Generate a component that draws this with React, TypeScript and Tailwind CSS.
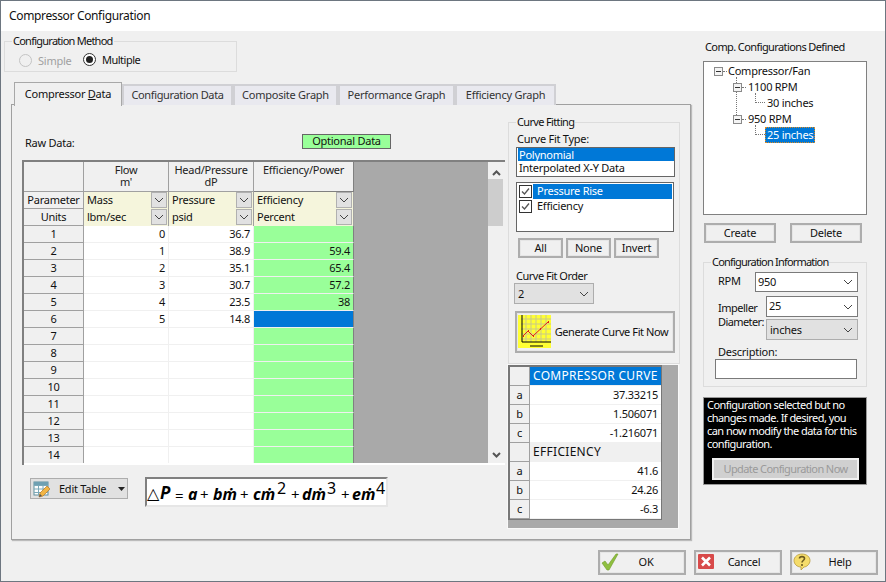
import { ReactNode } from 'react'

const rows = [
  { n: '1', flow: '0', dp: '36.7', eff: '' },
  { n: '2', flow: '1', dp: '38.9', eff: '59.4' },
  { n: '3', flow: '2', dp: '35.1', eff: '65.4' },
  { n: '4', flow: '3', dp: '30.7', eff: '57.2' },
  { n: '5', flow: '4', dp: '23.5', eff: '38' },
  { n: '6', flow: '5', dp: '14.8', eff: '', selected: true },
  { n: '7', flow: '', dp: '', eff: '' },
  { n: '8', flow: '', dp: '', eff: '' },
  { n: '9', flow: '', dp: '', eff: '' },
  { n: '10', flow: '', dp: '', eff: '' },
  { n: '11', flow: '', dp: '', eff: '' },
  { n: '12', flow: '', dp: '', eff: '' },
  { n: '13', flow: '', dp: '', eff: '' },
  { n: '14', flow: '', dp: '', eff: '' },
]

const fitRows = [
  { h: '', v: 'COMPRESSOR CURVE', kind: 'title' },
  { h: 'a', v: '37.33215' },
  { h: 'b', v: '1.506071' },
  { h: 'c', v: '-1.216071' },
  { h: '', v: 'EFFICIENCY', kind: 'section' },
  { h: 'a', v: '41.6' },
  { h: 'b', v: '24.26' },
  { h: 'c', v: '-6.3' },
]

function Chevron({ className = 'text-[#444]' }: { className?: string }) {
  return (
    <svg width="10" height="6" viewBox="0 0 10 6" className={className}>
      <path d="M1 1l4 4 4-4" fill="none" stroke="currentColor" strokeWidth="1" />
    </svg>
  )
}

function Button({ className, children }: { className: string; children: ReactNode }) {
  return (
    <div className={`absolute flex items-center justify-center whitespace-nowrap border-2 border-[#adadad] bg-[#f0f0f0] shadow-[inset_0_0_0_1px_#e6e6e6] ${className}`}>
      {children}
    </div>
  )
}

function Group({ className, label, labelClass }: { className: string; label: string; labelClass: string }) {
  return (
    <div className={`absolute border border-[#dcdcdc] ${className}`}>
      <span className={`absolute left-[7px] top-[-9px] whitespace-nowrap bg-[#f0f0f0] px-px leading-4 ${labelClass}`}>{label}</span>
    </div>
  )
}

function Text({ className, children }: { className: string; children: ReactNode }) {
  return <span className={`absolute whitespace-nowrap leading-4 ${className}`}>{children}</span>
}

function HeaderSelect({ label }: { label: string }) {
  return (
    <div className="relative h-full flex-1 border-r border-[#a0a0a0] bg-[#f5f5dc] pl-[3px] leading-[16px]">
      {label}
      <div className="absolute right-[1px] top-0 flex h-[16px] w-[16px] items-center justify-center border border-[#b0b0b0] bg-[#e1e1e1]">
        <Chevron />
      </div>
    </div>
  )
}

function Check({ top }: { top: string }) {
  return (
    <div className={`absolute left-[519px] flex h-[13px] w-[13px] items-center justify-center border border-[#333] bg-white ${top}`}>
      <svg width="11" height="11" viewBox="0 0 11 11">
        <path d="M2 5.500l2.500 2.500L9 2.500" fill="none" stroke="#555" strokeWidth="1.3" />
      </svg>
    </div>
  )
}

function MinusBox({ className }: { className: string }) {
  return (
    <div className={`absolute flex h-[9px] w-[9px] items-center justify-center border border-[#8a8a8a] bg-[#f4f4f4] ${className}`}>
      <div className="h-px w-[5px] bg-[#333]" />
    </div>
  )
}

function Tab({ className, label }: { className: string; label: string }) {
  return (
    <div className={`absolute top-[84px] flex h-[21px] items-center justify-center whitespace-nowrap border-2 border-b-0 border-[#d0d0d4] bg-[#e9e9ef] text-[#333] ${className}`}>
      {label}
    </div>
  )
}

export default function App() {
  return (
    <div className="relative h-[582px] w-[886px] overflow-hidden bg-[#f0f0f0] font-['Noto_Sans',sans-serif] text-[11px] tracking-[-0.25px] text-[#111]">
      <div className="absolute left-0 top-0 h-full w-px bg-[#6d7680]" />
      <div className="absolute right-0 top-0 h-full w-px bg-[#6d7680]" />
      <div className="absolute left-0 top-0 h-px w-full bg-[#6d7680]" />
      <div className="absolute bottom-0 left-0 h-px w-full bg-[#6d7680]" />
      <div className="absolute left-px top-px h-[30px] w-[884px] bg-white" />
      <Text className="left-[9px] top-[8px] text-[12px] tracking-[-0.35px]">Compressor Configuration</Text>

      <Group className="left-[4px] top-[41px] h-[31px] w-[233px]" label="Configuration Method" labelClass="tracking-[-0.75px]" />
      <div className="absolute left-[19px] top-[54px] h-[13px] w-[13px] rounded-full border border-[#c4c4c4] bg-[#f0f0f0]" />
      <Text className="left-[38px] top-[53px] text-[#a0a0a0]">Simple</Text>
      <div className="absolute left-[83px] top-[53px] flex h-[13px] w-[13px] items-center justify-center rounded-full border border-[#333] bg-white">
        <div className="h-[7px] w-[7px] rounded-full bg-[#222]" />
      </div>
      <Text className="left-[102px] top-[52px] tracking-[-0.5px]">Multiple</Text>

      {/* tabs */}
      <div className="absolute left-[11px] top-[104px] h-[436px] w-[680px] border border-[#a0a0a0] shadow-[1px_1px_1px_#bbb]" />
      <Tab className="left-[122px] w-[111px] tracking-[-0.35px]" label="Configuration Data" />
      <Tab className="left-[233px] w-[105px]" label="Composite Graph" />
      <Tab className="left-[338px] w-[117px]" label="Performance Graph" />
      <Tab className="left-[455px] w-[101px]" label="Efficiency Graph" />
      <div className="absolute left-[14px] top-[82px] flex h-[24px] w-[108px] items-center justify-center border border-b-0 border-[#a8a8a8] bg-[#f0f0f0]">
        <span>Compressor <span className="underline">D</span>ata</span>
      </div>

      <Text className="left-[25px] top-[135px]">Raw Data:</Text>
      <div className="absolute left-[302px] top-[134px] flex h-[15px] w-[89px] items-center justify-center border border-[#666] bg-[#99ff99]">Optional Data</div>

      {/* raw data grid */}
      <div className="absolute left-[22px] top-[160px] h-[305px] w-[483px] border-l-2 border-t-2 border-[#808080] bg-[#a9a9a9]">
        <div className="flex h-[30px] w-[330px] bg-[#f0f0f0] text-center leading-[12px] text-[#222]">
          <div className="w-[60px] border-b border-r border-[#a0a0a0]" />
          <div className="w-[85px] border-b border-r border-[#a0a0a0] pt-[2px]">Flow<br />m'</div>
          <div className="w-[85px] border-b border-r border-[#a0a0a0] pt-[2px]">Head/Pressure<br />dP</div>
          <div className="w-[100px] border-b border-r border-[#808080] pt-[2px]">Efficiency/Power</div>
        </div>
        {[['Parameter', 'Mass', 'Pressure', 'Efficiency'], ['Units', 'lbm/sec', 'psid', 'Percent']].map((row) => (
          <div key={row[0]} className="flex h-[17px] w-[330px]">
            <div className="w-[60px] border-b border-r border-[#a0a0a0] bg-[#f0f0f0] text-center leading-[15px]">{row[0]}</div>
            <div className="flex h-[17px] w-[270px]">
              <div className="w-[85px]"><HeaderSelect label={row[1]} /></div>
              <div className="w-[85px]"><HeaderSelect label={row[2]} /></div>
              <div className="w-[100px]"><HeaderSelect label={row[3]} /></div>
            </div>
          </div>
        ))}
        {rows.map((r) => (
          <div key={r.n} className="flex h-[17px] w-[330px] leading-[15px]">
            <div className="w-[60px] border-b border-r border-[#a0a0a0] bg-[#f0f0f0] text-center">{r.n}</div>
            <div className="w-[85px] border-b border-r border-[#f0f0f0] bg-white pr-[3px] text-right">{r.flow}</div>
            <div className="w-[85px] border-b border-r border-[#f0f0f0] bg-white pr-[3px] text-right">{r.dp}</div>
            <div className={`w-[100px] border-b border-r border-b-[#f0f0f0] border-r-[#808080] pr-[3px] text-right ${r.selected ? 'bg-[#0078d7]' : 'bg-[#99ff99]'}`}>{r.eff}</div>
          </div>
        ))}
        <div className="absolute right-0 top-0 h-full w-[17px] bg-[#f0f0f0]">
          <svg width="9" height="6" viewBox="0 0 9 6" className="absolute left-[4px] top-[8px]">
            <path d="M1 5l3.500-3.500L8 5" fill="none" stroke="#555" strokeWidth="2" />
          </svg>
          <div className="absolute left-0 top-[17px] h-[47px] w-[15px] bg-[#cdcdcd]" />
          <svg width="9" height="6" viewBox="0 0 9 6" className="absolute bottom-[7px] left-[4px]">
            <path d="M1 1l3.500 3.500L8 1" fill="none" stroke="#555" strokeWidth="2" />
          </svg>
        </div>
        <div className="absolute bottom-0 left-0 h-[2px] w-full bg-white" />
      </div>

      {/* edit table */}
      <div className="absolute left-[30px] top-[478px] h-[21px] w-[98px] border border-[#adadad] bg-[#e1e1e1]">
        <svg width="18" height="18" viewBox="0 0 18 18" className="absolute left-[2px] top-px">
          <rect x="1" y="2" width="14" height="13" fill="#fdfdfd" stroke="#5f8f9e" />
          <path d="M1 5.500h14M1 9h14M1 12.500h14M5.500 2v13M10 2v13" stroke="#7ba9b8" strokeWidth="1" />
          <rect x="1" y="2" width="14" height="3" fill="#6fa0b2" />
          <path d="M6 17l1-4 7-7 3 3-7 7z" fill="#f2b544" stroke="#b5792a" strokeWidth=".7" />
          <path d="M6 17l1-3 2 2z" fill="#555" />
        </svg>
        <Text className="left-[28px] top-[2px]">Edit Table</Text>
        <svg width="7" height="4" viewBox="0 0 7 4" className="absolute left-[87px] top-[8px]">
          <path d="M0 0h7L3.500 4z" fill="#222" />
        </svg>
      </div>

      {/* equation */}
      <div className="absolute left-[145px] top-[477px] h-[30px] w-[243px] border-2 border-[#e6e6e6] border-l-[#808080] border-t-[#808080] bg-white font-['Liberation_Sans',sans-serif] text-[15px] font-bold italic tracking-normal text-black">
        <span className="absolute left-0 top-[6px] text-[16px] font-normal not-italic leading-4">△</span>
        <span className="absolute left-[13px] top-[4px] text-[17px] leading-5">P</span>
        <span className="absolute left-[28px] top-[6px] font-normal not-italic leading-5">=</span>
        <span className="absolute left-[41px] top-[5px] text-[16px] leading-5">a</span>
        <span className="absolute left-[53px] top-[5px] font-normal not-italic leading-5">+</span>
        <span className="absolute left-[66px] top-[5px] text-[16px] leading-5">bṁ</span>
        <span className="absolute left-[93px] top-[5px] font-normal not-italic leading-5">+</span>
        <span className="absolute left-[106px] top-[5px] text-[16px] leading-5">cṁ</span>
        <span className="absolute left-[130px] top-[-1px] font-['Liberation_Serif',serif] text-[16px] font-normal not-italic leading-5">2</span>
        <span className="absolute left-[144px] top-[5px] font-normal not-italic leading-5">+</span>
        <span className="absolute left-[155px] top-[5px] text-[16px] leading-5">dṁ</span>
        <span className="absolute left-[180px] top-[-1px] font-['Liberation_Serif',serif] text-[16px] font-normal not-italic leading-5">3</span>
        <span className="absolute left-[194px] top-[5px] font-normal not-italic leading-5">+</span>
        <span className="absolute left-[205px] top-[5px] text-[16px] leading-5">eṁ</span>
        <span className="absolute left-[229px] top-[-1px] font-['Liberation_Serif',serif] text-[16px] font-normal not-italic leading-5">4</span>
      </div>

      {/* curve fitting */}
      <Group className="left-[508px] top-[122px] h-[242px] w-[172px]" label="Curve Fitting" labelClass="tracking-[-0.65px]" />
      <Text className="left-[517px] top-[131px]">Curve Fit Type:</Text>
      <div className="absolute left-[516px] top-[147px] h-[30px] w-[159px] border border-[#666] bg-white leading-[13px]">
        <div className="ml-px bg-[#0078d7] pl-[1px] text-white">Polynomial</div>
        <div className="ml-px pl-[1px]">Interpolated X-Y Data</div>
      </div>
      <div className="absolute left-[516px] top-[182px] h-[50px] w-[158px] border border-[#666] bg-white" />
      <div className="absolute left-[533px] top-[184px] h-[15px] w-[139px] bg-[#0078d7] pl-[4px] leading-[14px] text-white">Pressure Rise</div>
      <Text className="left-[537px] top-[198px]">Efficiency</Text>
      <Check top="top-[185px]" />
      <Check top="top-[200px]" />
      <Button className="left-[518px] top-[238px] h-[20px] w-[45px]">All</Button>
      <Button className="left-[566px] top-[238px] h-[20px] w-[45px]">None</Button>
      <Button className="left-[614px] top-[238px] h-[20px] w-[45px]">Invert</Button>
      <Text className="left-[516px] top-[268px] tracking-[-0.5px]">Curve Fit Order</Text>
      <div className="absolute left-[514px] top-[283px] h-[21px] w-[80px] border border-[#adadad] bg-[#e1e1e1] pl-[3px] leading-[19px]">
        2
        <div className="absolute right-[4px] top-[7px] flex"><Chevron /></div>
      </div>
      <Button className="left-[515px] top-[311px] h-[42px] w-[160px] tracking-[-0.4px]"><span className="pl-[33px]">Generate Curve Fit Now</span></Button>
      <svg width="33" height="33" viewBox="0 0 33 33" className="absolute left-[518px] top-[315px]">
        <rect width="33" height="33" fill="#ffff33" />
        <path d="M3 4h30M3 9h30M3 14h30M3 19h30M3 24h30M8 0v27M13 0v27M18 0v27M23 0v27M28 0v27" stroke="#c9c98a" strokeWidth="1" />
        <path d="M4 0v27h29" fill="none" stroke="#000" strokeWidth="1" />
        <path d="M12 31h13" stroke="#000" strokeWidth="1" />
        <path d="M5 21l5-5 5 5 15-14" fill="none" stroke="#e02020" strokeWidth="1" />
        <path d="M5 21h1M10 16h1M15 21h1M22 14h1M30 7h1" stroke="#e02020" strokeWidth="2" />
      </svg>

      {/* fit results */}
      <div className="absolute left-[507px] top-[364px] h-[165px] w-[172px] border border-[#f8f8f8] bg-[#a9a9a9]">
        <div className="absolute left-0 top-0 w-[154px] border-b border-l-2 border-r border-t-2 border-[#777] leading-[17px]">
          {fitRows.map((r, i) => (
            <div key={i} className="flex h-[19px]">
              <div className="w-[20px] border-b border-r border-[#a0a0a0] bg-[#f0f0f0] text-center">{r.h}</div>
              <div className={`flex-1 border-b border-[#f0f0f0] pl-[3px] pr-[3px] ${r.kind === 'title' ? 'bg-[#0078d7] text-[12px] tracking-[0.3px] text-white' : r.kind === 'section' ? 'bg-[#f0f0f0] text-[12px] tracking-[0.3px]' : 'bg-white text-right'}`}>{r.v}</div>
            </div>
          ))}
        </div>
      </div>

      {/* configurations */}
      <Text className="left-[705px] top-[39px] tracking-[-0.6px]">Comp. Configurations Defined</Text>
      <div className="absolute left-[703px] top-[61px] h-[154px] w-[164px] border border-[#808080] bg-white" />
      <div className="absolute left-[736px] top-[77px] h-[40px] border-l border-dotted border-[#777]" />
      <div className="absolute left-[755px] top-[93px] h-[10px] w-[10px] border-b border-l border-dotted border-[#777]" />
      <div className="absolute left-[755px] top-[125px] h-[10px] w-[10px] border-b border-l border-dotted border-[#777]" />
      <div className="absolute left-[723px] top-[71px] h-px w-[4px] border-t border-dotted border-[#777]" />
      <div className="absolute left-[742px] top-[87px] h-px w-[4px] border-t border-dotted border-[#777]" />
      <div className="absolute left-[742px] top-[119px] h-px w-[4px] border-t border-dotted border-[#777]" />
      <MinusBox className="left-[714px] top-[67px]" />
      <MinusBox className="left-[733px] top-[83px]" />
      <MinusBox className="left-[733px] top-[115px]" />
      <Text className="left-[728px] top-[63px]">Compressor/Fan</Text>
      <Text className="left-[748px] top-[79px]">1100 RPM</Text>
      <Text className="left-[767px] top-[95px]">30 inches</Text>
      <Text className="left-[748px] top-[111px]">950 RPM</Text>
      <div className="absolute left-[765px] top-[127px] h-[16px] w-[50px] whitespace-nowrap border border-dotted border-[#e08a1e] bg-[#0078d7] pl-px leading-[14px] text-white">25 inches</div>
      <Button className="left-[704px] top-[223px] h-[20px] w-[72px]">Create</Button>
      <Button className="left-[790px] top-[223px] h-[20px] w-[72px]">Delete</Button>

      <Group className="left-[703px] top-[262px] h-[125px] w-[164px]" label="Configuration Information" labelClass="tracking-[-0.8px]" />
      <Text className="left-[718px] top-[273px]">RPM</Text>
      <div className="absolute left-[755px] top-[272px] h-[20px] w-[103px] border border-[#7a7a7a] bg-white pl-[2px] leading-[18px]">
        950
        <div className="absolute right-[4px] top-[6px] flex"><Chevron /></div>
      </div>
      <Text className="left-[718px] top-[300px] tracking-[-0.5px]">Impeller</Text>
      <Text className="left-[718px] top-[314px] tracking-[-0.6px]">Diameter:</Text>
      <div className="absolute left-[766px] top-[296px] h-[21px] w-[92px] border border-[#7a7a7a] bg-white pl-[2px] leading-[17px]">
        25
        <div className="absolute right-[4px] top-[7px] flex"><Chevron /></div>
      </div>
      <div className="absolute left-[766px] top-[319px] h-[21px] w-[92px] border border-[#adadad] bg-[#e1e1e1] pl-[3px] leading-[19px]">
        inches
        <div className="absolute right-[4px] top-[7px] flex"><Chevron /></div>
      </div>
      <Text className="left-[718px] top-[344px]">Description:</Text>
      <div className="absolute left-[715px] top-[359px] h-[20px] w-[142px] border border-[#7a7a7a] bg-white" />

      <div className="absolute left-[703px] top-[397px] h-[88px] w-[164px] whitespace-nowrap border border-[#999] bg-black pl-[3px] leading-[13px] tracking-[-0.55px] text-white">
        Configuration selected but no<br />changes made. If desired, you<br />can now modify the data for this<br />configuration.
      </div>
      <div className="absolute left-[712px] top-[458px] flex h-[22px] w-[147px] items-center justify-center border-2 border-[#f0f0f0] bg-[#d0d0d0] tracking-[-0.6px] text-[#9a9a9a]">Update Configuration Now</div>

      {/* bottom buttons */}
      <Button className="left-[598px] top-[550px] h-[25px] w-[88px]"><span className="pl-[8px]">OK</span></Button>
      <svg width="18" height="18" viewBox="0 0 18 18" className="absolute left-[601px] top-[553px]">
        <path d="M1 10l3-2 3 4 8-11h2L8 17H6z" fill="#8fbf3f" stroke="#6f9a2c" strokeWidth=".6" />
      </svg>
      <Button className="left-[694px] top-[550px] h-[25px] w-[88px]"><span className="pl-[12px]">Cancel</span></Button>
      <svg width="16" height="16" viewBox="0 0 16 16" className="absolute left-[698px] top-[554px]">
        <rect width="16" height="15" rx="1" fill="#d84a4a" />
        <path d="M4 3.500l8 8M12 3.500l-8 8" stroke="#fff" strokeWidth="2.600" />
      </svg>
      <Button className="left-[790px] top-[550px] h-[25px] w-[88px]"><span className="pl-[12px]">Help</span></Button>
      <svg width="18" height="18" viewBox="0 0 18 18" className="absolute left-[793px] top-[553px]">
        <path d="M9 1c4.500 0 8 2.800 8 6.500S13.500 14 11 14l-3 3v-3C4 14 1 11 1 7.500S4.500 1 9 1z" fill="#f5dc6a" stroke="#b89a3a" strokeWidth=".8" />
        <path d="M6.500 5.500C6.500 3 11.500 3 11.500 5.500c0 2-2.500 2-2.500 4M9 11v2" fill="none" stroke="#6b5a20" strokeWidth="1.600" />
      </svg>
    </div>
  )
}
